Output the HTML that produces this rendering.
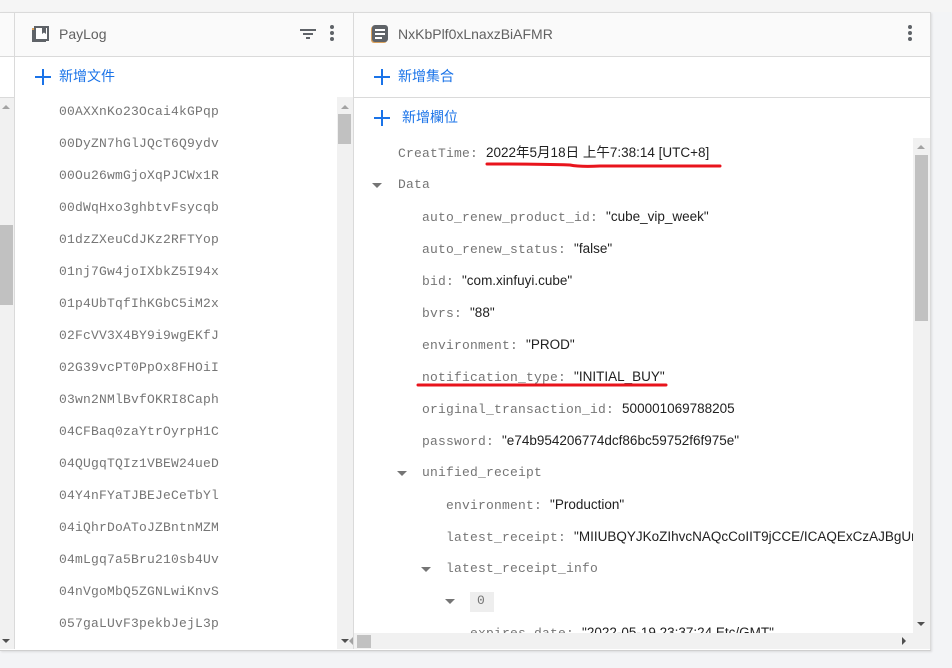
<!DOCTYPE html>
<html><head><meta charset="utf-8"><style>
body{margin:0;width:952px;height:668px;background:#f3f4f6;position:relative;overflow:hidden;font-family:"Liberation Sans","Noto Sans CJK TC",sans-serif}
.a{position:absolute}
.mono{font-family:"Liberation Mono","DejaVu Sans Mono",monospace;font-size:13px;color:#757575;letter-spacing:0.2px}
.val{font-family:"Liberation Sans","Noto Sans CJK TC",sans-serif;font-size:13.5px;color:#212121;letter-spacing:0}
.row{position:absolute;height:20px;line-height:20px;white-space:nowrap}
.tri{position:absolute;width:0;height:0;border-left:5px solid transparent;border-right:5px solid transparent;border-top:5px solid #757575}
.blue{color:#1a73e8;font-size:14px}
.plus{position:absolute;width:16px;height:16px}
.plus:before{content:"";position:absolute;left:7px;top:0;width:2px;height:16px;background:#1a73e8}
.plus:after{content:"";position:absolute;top:7px;left:0;height:2px;width:16px;background:#1a73e8}
.sb{background:#f1f1f1}
.th{background:#c1c1c1}
.up{position:absolute;width:0;height:0;border-left:4px solid transparent;border-right:4px solid transparent;border-bottom:4px solid #a3a3a3}
.dn{position:absolute;width:0;height:0;border-left:4px solid transparent;border-right:4px solid transparent;border-top:4px solid #505050}
</style></head><body>
<div class="a" style="left:0;top:0;width:952px;height:12px;background:#f5f5f5"></div>
<!-- panel -->
<div class="a" style="left:0;top:12px;width:930px;height:637px;background:#fff;border-top:1px solid #dadada;border-right:1px solid #dadada;border-bottom:1px solid #cfcfcf;box-shadow:1px 1px 2px rgba(0,0,0,.1)"></div>
<!-- header row -->
<div class="a" style="left:0;top:13px;width:930px;height:43px;background:#fafafa;border-bottom:1px solid #dadada"></div>
<div class="a" style="left:14px;top:13px;width:1px;height:636px;background:#dadada"></div>
<div class="a" style="left:353px;top:13px;width:1px;height:636px;background:#dadada"></div>
<div class="a" style="left:0;top:97px;width:14px;height:1px;background:#dadada"></div>
<div class="a" style="left:354px;top:97px;width:576px;height:1px;background:#dadada"></div>
<!-- PayLog header -->
<svg class="a" style="left:31px;top:25px" width="19" height="19" viewBox="0 0 19 19"><rect x="1" y="3" width="14" height="14" fill="#d9a05b"/><rect x="3" y="1" width="15" height="15" fill="#5f6368"/><rect x="5" y="3" width="11" height="11" fill="#fff"/><path d="M11 3h4v6l-2-1.5-2 1.5z" fill="#5f6368"/><rect x="1" y="5" width="2" height="12" fill="#5f6368"/><rect x="1" y="15" width="14" height="2" fill="#5f6368"/></svg>
<div class="row" style="left:59px;top:24px;font-size:14px;color:#616161">PayLog</div>
<svg class="a" style="left:299px;top:25px" width="18" height="18"><rect x="1" y="4" width="16" height="2" fill="#5f6368"/><rect x="4" y="8" width="10" height="2" fill="#5f6368"/><rect x="7" y="12" width="4" height="2" fill="#5f6368"/></svg>
<svg class="a" style="left:328px;top:24px" width="8" height="20"><circle cx="4" cy="3" r="2" fill="#5f6368"/><circle cx="4" cy="9" r="2" fill="#5f6368"/><circle cx="4" cy="15" r="2" fill="#5f6368"/></svg>
<!-- Doc header -->
<svg class="a" style="left:371px;top:25px" width="18" height="19"><rect x="0" y="1" width="16" height="17" rx="3" fill="#d9a05b"/><rect x="1" y="0" width="16" height="17" rx="3" fill="#5f6368"/><rect x="4" y="4" width="10" height="2" fill="#fff"/><rect x="4" y="8" width="10" height="2" fill="#fff"/><rect x="4" y="12" width="7" height="2" fill="#fff"/></svg>
<div class="row" style="left:398px;top:24px;font-size:14px;color:#616161">NxKbPlf0xLnaxzBiAFMR</div>
<svg class="a" style="left:906px;top:24px" width="8" height="20"><circle cx="4" cy="3" r="2" fill="#5f6368"/><circle cx="4" cy="9" r="2" fill="#5f6368"/><circle cx="4" cy="15" r="2" fill="#5f6368"/></svg>
<!-- add buttons -->
<div class="plus" style="left:35px;top:69px"></div><div class="row blue" style="left:59px;top:66px">新增文件</div>
<div class="plus" style="left:374px;top:69px"></div><div class="row blue" style="left:398px;top:66px">新增集合</div>
<div class="plus" style="left:374px;top:110px"></div><div class="row blue" style="left:402px;top:107px">新增欄位</div>
<!-- left sliver scrollbar -->
<div class="a sb" style="left:0;top:98px;width:14px;height:551px"></div>
<div class="a th" style="left:0;top:225px;width:13px;height:80px"></div>
<div class="up" style="left:2px;top:105px"></div>
<div class="dn" style="left:2px;top:639px"></div>
<!-- middle scrollbar -->
<div class="a sb" style="left:337px;top:97px;width:16px;height:552px"></div>
<div class="a th" style="left:338px;top:114px;width:13px;height:30px"></div>
<div class="up" style="left:341px;top:105px"></div>
<div class="dn" style="left:341px;top:639px"></div>
<!-- list -->
<div class="mono">
<div class="row" style="left:59px;top:102px">00AXXnKo23Ocai4kGPqp</div>
<div class="row" style="left:59px;top:134px">00DyZN7hGlJQcT6Q9ydv</div>
<div class="row" style="left:59px;top:166px">00Ou26wmGjoXqPJCWx1R</div>
<div class="row" style="left:59px;top:198px">00dWqHxo3ghbtvFsycqb</div>
<div class="row" style="left:59px;top:230px">01dzZXeuCdJKz2RFTYop</div>
<div class="row" style="left:59px;top:262px">01nj7Gw4joIXbkZ5I94x</div>
<div class="row" style="left:59px;top:294px">01p4UbTqfIhKGbC5iM2x</div>
<div class="row" style="left:59px;top:326px">02FcVV3X4BY9i9wgEKfJ</div>
<div class="row" style="left:59px;top:358px">02G39vcPT0PpOx8FHOiI</div>
<div class="row" style="left:59px;top:390px">03wn2NMlBvfOKRI8Caph</div>
<div class="row" style="left:59px;top:422px">04CFBaq0zaYtrOyrpH1C</div>
<div class="row" style="left:59px;top:454px">04QUgqTQIz1VBEW24ueD</div>
<div class="row" style="left:59px;top:486px">04Y4nFYaTJBEJeCeTbYl</div>
<div class="row" style="left:59px;top:518px">04iQhrDoAToJZBntnMZM</div>
<div class="row" style="left:59px;top:550px">04mLgq7a5Bru210sb4Uv</div>
<div class="row" style="left:59px;top:582px">04nVgoMbQ5ZGNLwiKnvS</div>
<div class="row" style="left:59px;top:614px">057gaLUvF3pekbJejL3p</div>
</div>
<!-- fields -->
<div class="a" style="left:354px;top:98px;width:560px;height:535px;overflow:hidden">
<div class="mono" style="position:relative;left:-354px;top:-98px">
<div class="row" style="left:398px;top:143px">CreatTime: <span class="val">2022年5月18日 上午7:38:14 [UTC+8]</span></div>
<div class="tri" style="left:372px;top:183px"></div><div class="row" style="left:398px;top:175px">Data</div>
<div class="row" style="left:422px;top:207px">auto_renew_product_id: <span class="val">"cube_vip_week"</span></div>
<div class="row" style="left:422px;top:239px">auto_renew_status: <span class="val">"false"</span></div>
<div class="row" style="left:422px;top:271px">bid: <span class="val">"com.xinfuyi.cube"</span></div>
<div class="row" style="left:422px;top:303px">bvrs: <span class="val">"88"</span></div>
<div class="row" style="left:422px;top:335px">environment: <span class="val">"PROD"</span></div>
<div class="row" style="left:422px;top:367px">notification_type: <span class="val">"INITIAL_BUY"</span></div>
<div class="row" style="left:422px;top:399px">original_transaction_id: <span class="val">500001069788205</span></div>
<div class="row" style="left:422px;top:431px">password: <span class="val">"e74b954206774dcf86bc59752f6f975e"</span></div>
<div class="tri" style="left:397px;top:471px"></div><div class="row" style="left:422px;top:463px">unified_receipt</div>
<div class="row" style="left:446px;top:495px">environment: <span class="val">"Production"</span></div>
<div class="row" style="left:446px;top:527px">latest_receipt: <span class="val">"MIIUBQYJKoZIhvcNAQcCoIIT9jCCE/ICAQExCzAJBgUrDgMCGgUAMIIDpjC</span></div>
<div class="tri" style="left:421px;top:567px"></div><div class="row" style="left:446px;top:559px">latest_receipt_info</div>
<div class="tri" style="left:445px;top:599px"></div><div class="a" style="left:470px;top:592px;width:24px;height:20px;background:#eeeeee"></div><div class="row" style="left:477px;top:591px">0</div>
<div class="row" style="left:470px;top:623px">expires_date: <span class="val">"2022-05-19 23:37:24 Etc/GMT"</span></div>
</div></div>
<!-- red underlines -->
<svg class="a" style="left:480px;top:150px" width="250" height="24"><path d="M7 14 Q60 14 90 15 Q100 17 120 16 L240 16" stroke="#e8141c" stroke-width="3" fill="none" stroke-linecap="round"/></svg>
<svg class="a" style="left:415px;top:380px" width="260" height="12"><path d="M3 5 L251 5" stroke="#e8141c" stroke-width="3" fill="none" stroke-linecap="round"/></svg>
<!-- right scrollbars -->
<div class="a sb" style="left:913px;top:138px;width:17px;height:495px"></div>
<div class="a th" style="left:915px;top:155px;width:13px;height:166px"></div>
<div class="up" style="left:917px;top:145px"></div>
<div class="dn" style="left:917px;top:622px"></div>
<div class="a sb" style="left:354px;top:633px;width:576px;height:16px"></div>
<div class="a th" style="left:357px;top:635px;width:14px;height:13px"></div>
<div class="a" style="left:349px;top:637px;width:0;height:0;border-top:4px solid transparent;border-bottom:4px solid transparent;border-right:4px solid #a3a3a3;margin-left:0;left:349px"></div>
<div class="a" style="left:902px;top:637px;width:0;height:0;border-top:4px solid transparent;border-bottom:4px solid transparent;border-left:4px solid #505050"></div>
</body></html>
